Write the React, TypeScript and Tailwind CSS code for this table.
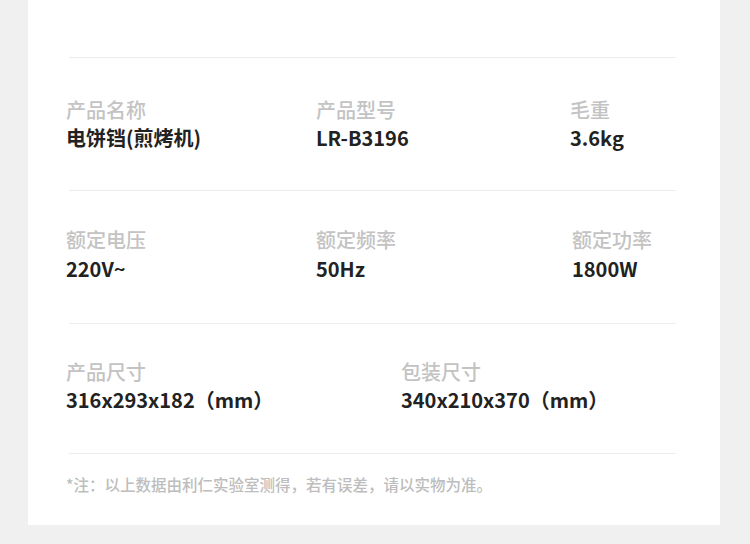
const font = { fontFamily: '"Noto Sans CJK SC", "Noto Sans", sans-serif' };

interface Spec {
  label: string;
  value: string;
  wide?: boolean;
}

function SpecCell({ label, value, wide = false }: Spec) {
  return (
    <div>
      <div className="text-[20px] leading-[28px] font-medium text-[#c3c3c3]">{label}</div>
      <div
        className={
          wide
            ? 'text-[20px] leading-[30px] font-bold text-[#222222]'
            : 'text-[20px] leading-[28px] font-bold text-[#222222]'
        }
      >
        {value}
      </div>
    </div>
  );
}

function Divider() {
  return <div className="ml-[41px] mr-[44px] h-px bg-[#ededed]" />;
}

export default function App() {
  return (
    <div className="h-[544px] w-[750px] bg-[#f0f0f0] overflow-hidden" style={font}>
      <div className="ml-[28px] w-[692px] h-[525px] bg-white pt-[57px]">
        <Divider />
        {/* row 1 */}
        <div className="h-[132px] pt-[38px] pl-[38px] grid grid-cols-[250px_254px_1fr]">
          <SpecCell label="产品名称" value="电饼铛(煎烤机)" />
          <SpecCell label="产品型号" value="LR-B3196" />
          <SpecCell label="毛重" value="3.6kg" />
        </div>
        <Divider />
        {/* row 2 */}
        <div className="h-[132px] pt-[35px] pl-[38px] grid grid-cols-[250px_256px_1fr]">
          <SpecCell label="额定电压" value="220V~" wide />
          <SpecCell label="额定频率" value="50Hz" wide />
          <SpecCell label="额定功率" value="1800W" wide />
        </div>
        <Divider />
        {/* row 3 */}
        <div className="h-[129px] pt-[34px] pl-[38px] grid grid-cols-[335px_1fr]">
          <SpecCell label="产品尺寸" value="316x293x182（mm）" />
          <SpecCell label="包装尺寸" value="340x210x370（mm）" />
        </div>
        <Divider />
        <div className="pt-[20px] pl-[38px] text-[15.5px] leading-[20px] font-medium text-[#bdbdbd]">
          *注：以上数据由利仁实验室测得，若有误差，请以实物为准。
        </div>
      </div>
    </div>
  );
}
